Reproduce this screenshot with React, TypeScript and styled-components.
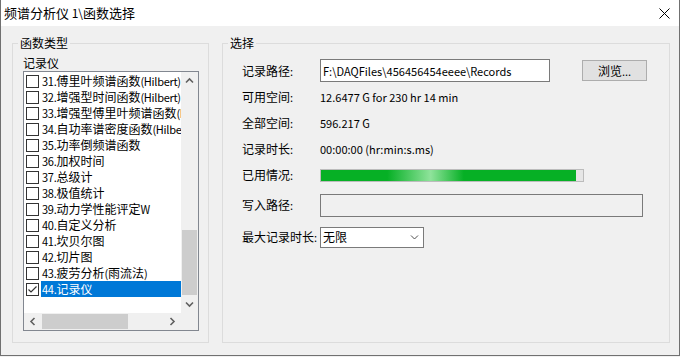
import styled, { createGlobalStyle } from "styled-components";

const GlobalStyle = createGlobalStyle`
  html, body {
    margin: 0;
    padding: 0;
  }
  body {
    width: 680px;
    height: 357px;
    overflow: hidden;
    background: #f0f0f0;
    font-family: "Noto Sans CJK SC", "Noto Sans", sans-serif;
    font-size: 12px;
    color: #000;
  }
`;

const FUNCTIONS = [
  "31.傅里叶频谱函数(Hilbert)",
  "32.增强型时间函数(Hilbert)",
  "33.增强型傅里叶频谱函数(Hilbert)",
  "34.自功率谱密度函数(Hilbert)",
  "35.功率倒频谱函数",
  "36.加权时间",
  "37.总级计",
  "38.极值统计",
  "39.动力学性能评定W",
  "40.自定义分析",
  "41.坎贝尔图",
  "42.切片图",
  "43.疲劳分析(雨流法)",
  "44.记录仪",
];

const SELECTED = "44.记录仪";
const USED_RATIO = 0.973;

// latin runs render smaller than the CJK glyphs in the original UI font
const Latin = styled.span<{ $tight?: boolean }>`
  font-size: 0.92em;
  letter-spacing: ${(p) => (p.$tight ? "-0.3px" : "0")};
`;

const Mixed = ({ text, tight }: { text: string; tight?: boolean }) => (
  <>
    {text
      .split(/([\x20-\x7e]+)/)
      .filter(Boolean)
      .map((part, i) =>
        /^[\x20-\x7e]+$/.test(part) ? (
          <Latin key={i} $tight={tight}>
            {part}
          </Latin>
        ) : (
          part
        )
      )}
  </>
);

const Window = styled.div`
  width: 680px;
  height: 356px;
  box-sizing: border-box;
  border: 1px solid #707070;
  border-top: none;
  background: #f0f0f0;
  display: flex;
  flex-direction: column;
`;

const TitleBar = styled.div`
  height: 26px;
  flex: none;
  background: #fff;
  display: flex;
  align-items: center;
  justify-content: space-between;
  padding: 0 9px 0 3px;
`;

const Title = styled.span`
  font-size: 13px;
  line-height: 18px;
`;

const Body = styled.div`
  flex: 1;
  display: flex;
  gap: 13px;
  padding: 9px 9px 12px 11px;
`;

const Group = styled.fieldset<{ $width: number }>`
  margin: 0;
  padding: 0;
  min-width: 0;
  width: ${(p) => p.$width}px;
  height: 308px;
  box-sizing: border-box;
  border: 1px solid #dcdcdc;
  flex: none;
`;

const Legend = styled.legend`
  margin-left: 5px;
  padding: 0 2px;
  line-height: 16px;
`;

const GroupInner = styled.div<{ $left: number; $top: number }>`
  padding: ${(p) => p.$top}px 0 0 ${(p) => p.$left}px;
`;

const Caption = styled.div`
  line-height: 16px;
  margin-top: 4px;
`;

const ListBox = styled.div`
  width: 176px;
  height: 260px;
  box-sizing: border-box;
  border: 1px solid #828790;
  background: #fff;
  display: grid;
  grid-template-columns: 1fr 17px;
  grid-template-rows: 1fr 17px;
`;

const Viewport = styled.div`
  overflow: hidden;
  padding-top: 1px;
`;

const Row = styled.div`
  height: 16px;
  display: flex;
  align-items: center;
`;

const Check = styled.span`
  width: 13px;
  height: 13px;
  box-sizing: border-box;
  border: 1px solid #333;
  background: #fff;
  margin: 0 2px;
  flex: none;
  display: flex;
  align-items: center;
  justify-content: center;
`;

const ItemText = styled.span<{ $selected: boolean }>`
  flex: 1;
  white-space: nowrap;
  line-height: 16px;
  padding-left: 1px;
  background: ${(p) => (p.$selected ? "#0078d7" : "transparent")};
  color: ${(p) => (p.$selected ? "#fff" : "#000")};
`;

const ScrollBar = styled.div<{ $vertical?: boolean }>`
  background: #f0f0f0;
  display: flex;
  flex-direction: ${(p) => (p.$vertical ? "column" : "row")};
`;

const ArrowBtn = styled.div`
  width: 17px;
  height: 17px;
  flex: none;
  display: flex;
  align-items: center;
  justify-content: center;
`;

const Track = styled.div<{ $vertical?: boolean }>`
  flex: 1;
  display: flex;
  flex-direction: ${(p) => (p.$vertical ? "column" : "row")};
  justify-content: ${(p) => (p.$vertical ? "flex-end" : "flex-start")};
  align-items: center;
`;

const Thumb = styled.div<{ $vertical?: boolean }>`
  background: #cdcdcd;
  width: ${(p) => (p.$vertical ? "15px" : "86px")};
  height: ${(p) => (p.$vertical ? "65px" : "15px")};
  margin: ${(p) => (p.$vertical ? "0 0 1px 0" : "0 0 0 1px")};
`;

const Corner = styled.div`
  background: #f0f0f0;
`;

const Form = styled.div`
  display: grid;
  grid-template-columns: 78px 1fr;
  grid-template-rows: 27px 26px 26px 26px 26px 34px 30px;
  align-items: center;
`;

const Label = styled.span`
  line-height: 16px;
  white-space: nowrap;
`;

const Value = styled.span`
  line-height: 16px;
  white-space: nowrap;
`;

const Line = styled.div`
  display: flex;
  align-items: center;
  gap: 32px;
`;

const TextBox = styled.div<{ $width: number; $readOnly?: boolean }>`
  width: ${(p) => p.$width}px;
  height: 23px;
  box-sizing: border-box;
  border: 1px solid #7a7a7a;
  background: ${(p) => (p.$readOnly ? "#f0f0f0" : "#fff")};
  padding-left: 2px;
  line-height: 21px;
  white-space: nowrap;
  overflow: hidden;
`;

const Button = styled.div`
  width: 65px;
  height: 21px;
  box-sizing: border-box;
  border: 1px solid #adadad;
  background: #e1e1e1;
  display: flex;
  align-items: center;
  justify-content: center;
  line-height: 16px;
`;

const Progress = styled.div`
  width: 264px;
  height: 13px;
  box-sizing: border-box;
  border: 1px solid #bcbcbc;
  background: #e6e6e6;
`;

const ProgressFill = styled.div`
  height: 100%;
  background: linear-gradient(
    90deg,
    #06b025 0%,
    #06b025 26%,
    #8fe39b 43%,
    #06b025 56%,
    #06b025 100%
  );
`;

const Combo = styled.div`
  width: 104px;
  height: 21px;
  box-sizing: border-box;
  border: 1px solid #7a7a7a;
  background: #fff;
  display: flex;
  align-items: center;
  justify-content: space-between;
  padding: 0 4px 0 2px;
  line-height: 16px;
`;

const Chevron = ({
  dir,
  size = 9,
  weight = 1.6,
  color = "#606060",
}: {
  dir: "up" | "down" | "left" | "right";
  size?: number;
  weight?: number;
  color?: string;
}) => {
  const rot = { up: 0, right: 90, down: 180, left: 270 }[dir];
  return (
    <svg width={size} height={size} viewBox="0 0 9 9">
      <polyline
        points="1,6.5 4.5,3 8,6.5"
        fill="none"
        stroke={color}
        strokeWidth={weight}
        transform={`rotate(${rot} 4.5 4.5)`}
      />
    </svg>
  );
};

const CloseIcon = () => (
  <svg width="11" height="11" viewBox="0 0 11 11">
    <path d="M0.5 0.5 L10.5 10.5 M10.5 0.5 L0.5 10.5" stroke="#000" strokeWidth="1" />
  </svg>
);

const CheckMark = () => (
  <svg width="11" height="11" viewBox="0 0 11 11">
    <polyline points="1.5,5.5 4,8 9.5,2.5" fill="none" stroke="#333" strokeWidth="1.2" />
  </svg>
);

export default function App() {
  return (
    <>
      <GlobalStyle />
      <Window>
        <TitleBar>
          <Title>
            <Mixed text="频谱分析仪 1\函数选择" />
          </Title>
          <CloseIcon />
        </TitleBar>
        <Body>
          <Group $width={197}>
            <Legend>函数类型</Legend>
            <GroupInner $left={10} $top={0}>
              <Caption>记录仪</Caption>
              <ListBox>
                <Viewport>
                  {FUNCTIONS.map((name) => (
                    <Row key={name}>
                      <Check>{name === SELECTED && <CheckMark />}</Check>
                      <ItemText $selected={name === SELECTED}>
                        <Mixed text={name} tight />
                      </ItemText>
                    </Row>
                  ))}
                </Viewport>
                <ScrollBar $vertical>
                  <ArrowBtn>
                    <Chevron dir="up" />
                  </ArrowBtn>
                  <Track $vertical>
                    <Thumb $vertical />
                  </Track>
                  <ArrowBtn>
                    <Chevron dir="down" />
                  </ArrowBtn>
                </ScrollBar>
                <ScrollBar>
                  <ArrowBtn>
                    <Chevron dir="left" />
                  </ArrowBtn>
                  <Track>
                    <Thumb />
                  </Track>
                  <ArrowBtn>
                    <Chevron dir="right" />
                  </ArrowBtn>
                </ScrollBar>
                <Corner />
              </ListBox>
            </GroupInner>
          </Group>
          <Group $width={448}>
            <Legend>选择</Legend>
            <GroupInner $left={19} $top={6}>
              <Form>
                <Label>
                  <Mixed text="记录路径:" />
                </Label>
                <Line>
                  <TextBox $width={230}>
                    <Mixed text="F:\DAQFiles\456456454eeee\Records" />
                  </TextBox>
                  <Button>
                    <Mixed text="浏览..." />
                  </Button>
                </Line>
                <Label>
                  <Mixed text="可用空间:" />
                </Label>
                <Value>
                  <Mixed text="12.6477 G for 230 hr 14 min" />
                </Value>
                <Label>
                  <Mixed text="全部空间:" />
                </Label>
                <Value>
                  <Mixed text="596.217 G" />
                </Value>
                <Label>
                  <Mixed text="记录时长:" />
                </Label>
                <Value>
                  <Mixed text="00:00:00 (hr:min:s.ms)" />
                </Value>
                <Label>
                  <Mixed text="已用情况:" />
                </Label>
                <Progress>
                  <ProgressFill style={{ width: `${USED_RATIO * 100}%` }} />
                </Progress>
                <Label>
                  <Mixed text="写入路径:" />
                </Label>
                <TextBox $width={323} $readOnly />
                <Label>
                  <Mixed text="最大记录时长:" />
                </Label>
                <Combo>
                  <span>无限</span>
                  <Chevron dir="down" size={9} weight={1} color="#505050" />
                </Combo>
              </Form>
            </GroupInner>
          </Group>
        </Body>
      </Window>
    </>
  );
}
